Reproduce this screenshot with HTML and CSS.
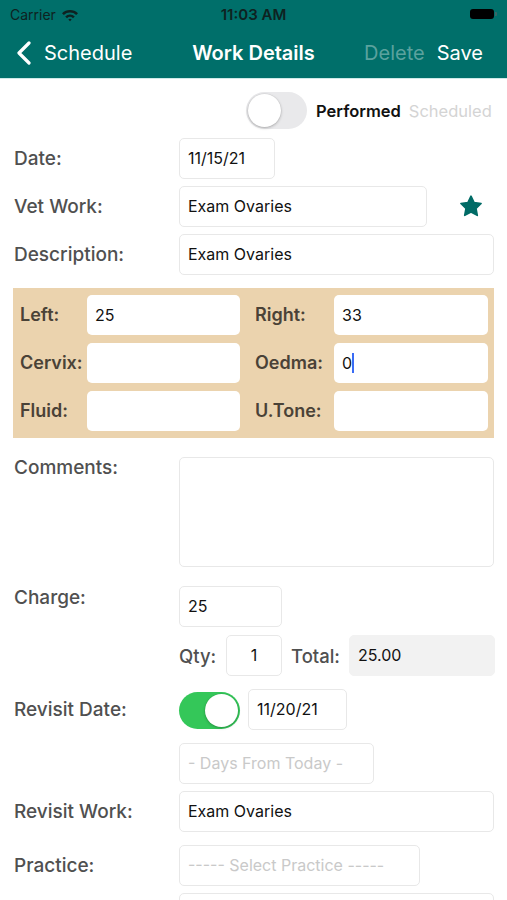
FILE: index.html
```html
<!DOCTYPE html>
<html>
<head>
<meta charset="utf-8">
<link rel="stylesheet" href="styles.css">
</head>
<body>
<header class="header">
  <div class="status">
    <div class="carrier">Carrier
      <svg class="wifi" width="18" height="14" viewBox="0 0 18 14">
        <path d="M1 5.2 A11.5 11.5 0 0 1 17 5.2 L15.2 7 A9 9 0 0 0 2.8 7 Z" fill="#0e2221"/>
        <path d="M4.2 8.4 A7 7 0 0 1 13.8 8.4 L12 10.2 A4.5 4.5 0 0 0 6 10.2 Z" fill="#0e2221"/>
        <path d="M7.3 11.5 A2.5 2.5 0 0 1 10.7 11.5 L9 13.3 Z" fill="#0e2221"/>
      </svg>
    </div>
    <div class="time">11:03 AM</div>
    <div class="battery"><span class="bat-body"></span><span class="bat-nub"></span></div>
  </div>
  <nav class="nav">
    <div class="back">
      <svg width="16" height="24" viewBox="0 0 16 24"><path d="M13 2 L3 12 L13 22" fill="none" stroke="#fff" stroke-width="3.2" stroke-linecap="round" stroke-linejoin="round"/></svg>
      <span>Schedule</span>
    </div>
    <div class="title">Work Details</div>
    <div class="actions"><span class="delete">Delete</span><span class="save">Save</span></div>
  </nav>
</header>
<main class="content">
  <div class="toggle-row">
    <span class="switch off"><span class="knob"></span></span>
    <span class="performed">Performed</span>
    <span class="scheduled">Scheduled</span>
  </div>

  <div class="row r-date">
    <div class="label">Date:</div>
    <div class="field w-date">11/15/21</div>
  </div>
  <div class="row r-tight">
    <div class="label">Vet Work:</div>
    <div class="field w-vet">Exam Ovaries</div>
    <svg class="star" width="24" height="23" viewBox="0 0 24 23"><path d="M12 1.2 L15.1 7.6 L22.1 8.5 L17 13.4 L18.3 20.4 L12 17 L5.7 20.4 L7 13.4 L1.9 8.5 L8.9 7.6 Z" fill="#006b66" stroke="#006b66" stroke-width="1.6" stroke-linejoin="round"/></svg>
  </div>
  <div class="row r-tight">
    <div class="label">Description:</div>
    <div class="field w-full">Exam Ovaries</div>
  </div>

  <section class="exam">
    <div class="elabel">Left:</div><div class="efield">25</div>
    <div class="elabel right">Right:</div><div class="efield">33</div>
    <div class="elabel">Cervix:</div><div class="efield"></div>
    <div class="elabel right">Oedma:</div><div class="efield">0<span class="caret"></span></div>
    <div class="elabel">Fluid:</div><div class="efield"></div>
    <div class="elabel right">U.Tone:</div><div class="efield"></div>
  </section>

  <div class="row r-comments">
    <div class="label top">Comments:</div>
    <div class="field w-full area"></div>
  </div>

  <div class="row r-charge">
    <div class="label top2">Charge:</div>
    <div class="charge-block">
      <div class="field w-charge">25</div>
      <div class="qty-row">
        <span class="ilabel qty">Qty:</span>
        <div class="field w-qty">1</div>
        <span class="ilabel total">Total:</span>
        <div class="field w-total">25.00</div>
      </div>
    </div>
  </div>

  <div class="row r-revisit">
    <div class="label">Revisit Date:</div>
    <span class="switch on"><span class="knob"></span></span>
    <div class="field w-rdate">11/20/21</div>
  </div>
  <div class="row r-days">
    <div class="label"></div>
    <div class="field w-days placeholder">- Days From Today -</div>
  </div>
  <div class="row r-tight">
    <div class="label">Revisit Work:</div>
    <div class="field w-full">Exam Ovaries</div>
  </div>
  <div class="row r-practice">
    <div class="label">Practice:</div>
    <div class="field w-practice placeholder">----- Select Practice -----</div>
  </div>
  <div class="row r-tight">
    <div class="label"></div>
    <div class="field w-full"></div>
  </div>
</main>
</body>
</html>
```
FILE: styles.css
```css
* { box-sizing: border-box; }
html, body { margin: 0; padding: 0; }
body {
  width: 507px;
  height: 900px;
  overflow: hidden;
  background: #fff;
  font-family: Inter, "Noto Sans", sans-serif;
  color: #111;
}
.header {
  background: #006f6a;
  border-bottom: 1px solid #cdeae8;
}
.status {
  height: 28px;
  display: flex;
  align-items: center;
  justify-content: space-between;
  padding: 0 10px;
  position: relative;
}
.carrier {
  font-size: 14px;
  color: #0e2221;
  display: flex;
  align-items: center;
  gap: 5px;
  padding-top: 1px;
}
.time {
  position: absolute;
  left: 0; right: 0;
  text-align: center;
  font-size: 15px;
  font-weight: 600;
  color: #0e2221;
}
.battery { display: flex; align-items: center; gap: 1px; margin-right: 0; }
.bat-body {
  width: 24px; height: 10px;
  background: #000;
  border-radius: 3px;
  display: block;
}
.bat-nub { width: 2px; height: 4px; background: #3a6866; border-radius: 0 1px 1px 0; display: block; }
.nav {
  height: 50px;
  display: flex;
  align-items: center;
  position: relative;
  padding: 0 24px 0 16px;
  color: #fff;
  font-size: 20px;
}
.back { display: flex; align-items: center; gap: 12px; }
.back svg { display: block; }
.title {
  position: absolute;
  left: 0; right: 0;
  text-align: center;
  font-weight: 600;
  pointer-events: none;
}
.actions { margin-left: auto; display: flex; gap: 12px; }
.delete { color: #5ba29e; }
.save { color: #fff; }

.content { padding: 0 13px 0 14px; }

.toggle-row {
  display: flex;
  align-items: center;
  margin-top: 13px;
  padding-left: 232px;
  height: 37px;
}
.switch {
  width: 61px; height: 37px;
  border-radius: 19px;
  background: #e9e9eb;
  position: relative;
  display: block;
  flex: none;
}
.switch .knob {
  position: absolute;
  top: 2px; left: 2px;
  width: 33px; height: 33px;
  border-radius: 50%;
  background: #fff;
  box-shadow: 0 1px 3px rgba(0,0,0,0.25), 0 0 0 0.5px rgba(0,0,0,0.06);
}
.switch.on { background: #34c759; }
.switch.on .knob { left: 26px; }
.performed { margin-left: 9px; font-size: 16.5px; font-weight: 600; color: #111; }
.scheduled { margin-left: 8px; font-size: 16.5px; color: #d4d4d4; }

.row { display: flex; align-items: center; }
.label {
  width: 165px;
  flex: none;
  font-size: 19px;
  font-weight: 500;
  color: #505050;
  line-height: 22px;
}
.field {
  height: 41px;
  border: 1px solid #e8e8e8;
  border-radius: 5px;
  background: #fff;
  font-size: 16px;
  line-height: 39px;
  padding: 0 8px;
  color: #111;
  white-space: nowrap;
}
.placeholder { color: #c9c9c9; }
.r-date { margin-top: 9px; }
.r-tight { margin-top: 7px; }
.w-date { width: 96px; }
.w-vet { width: 248px; }
.w-full { width: 316px; }
.star { margin-left: 32px; display: block; }

.exam {
  margin-top: 13px;
  margin-left: -1px;
  width: 481px;
  background: #ebd3ae;
  padding: 7px 6px 7px 7px;
  display: grid;
  grid-template-columns: 67px 153px 94px 154px;
  column-gap: 0;
  row-gap: 8px;
}
.elabel {
  font-size: 18px;
  font-weight: 600;
  color: #4a4237;
  line-height: 40px;
  white-space: nowrap;
}
.elabel.right { padding-left: 15px; }
.efield {
  height: 40px;
  background: #fff;
  border-radius: 5px;
  font-size: 16px;
  line-height: 40px;
  padding: 0 8px;
  color: #111;
}
.caret {
  display: inline-block;
  width: 2px; height: 20px;
  background: #3a6cf5;
  vertical-align: -4px;
  margin-left: 0;
}
.r-comments { margin-top: 19px; align-items: flex-start; }
.area { height: 110px; }
.r-charge { margin-top: 19px; align-items: flex-start; }
.label.top2 { padding-top: 1px; }
.w-charge { width: 103px; }
.qty-row { display: flex; align-items: center; margin-top: 8px; }
.ilabel { font-size: 18.5px; font-weight: 500; color: #505050; display: inline-block; flex: none; }
.ilabel.qty { width: 47px; }
.w-qty { width: 56px; text-align: center; }
.ilabel.total { width: 58px; margin-left: 9px; }
.w-total { width: 146px; background: #f2f2f2; border-color: #f2f2f2; }
.r-revisit { margin-top: 13px; }
.r-revisit .switch { margin-top: 1px; }
.w-rdate { width: 99px; margin-left: 8px; }
.r-days { margin-top: 13px; }
.w-days { width: 195px; }
.r-practice { margin-top: 13px; }
.w-practice { width: 241px; }
```
